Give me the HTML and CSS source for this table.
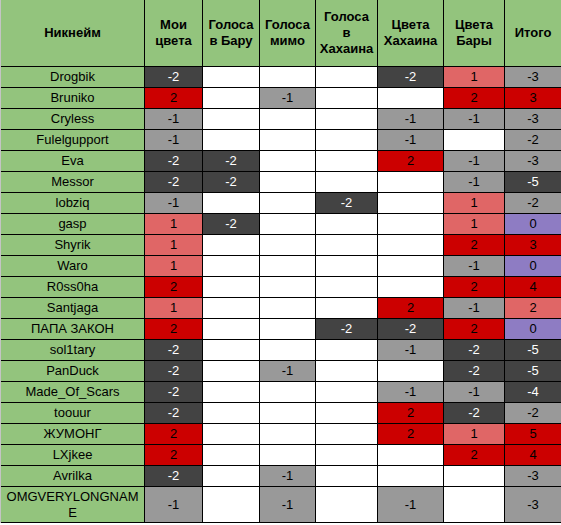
FILE: index.html
```html
<!DOCTYPE html>
<html lang="ru">
<head>
<meta charset="utf-8">
<title>Таблица</title>
<link rel="stylesheet" href="styles.css">
</head>
<body>
<div class="sheet">
  <div class="grid">
    <div class="c hd">Никнейм</div>
    <div class="c hd">Мои<br>цвета</div>
    <div class="c hd">Голоса<br>в Бару</div>
    <div class="c hd">Голоса<br>мимо</div>
    <div class="c hd">Голоса<br>в<br>Хахаина</div>
    <div class="c hd">Цвета<br>Хахаина</div>
    <div class="c hd">Цвета<br>Бары</div>
    <div class="c hd">Итого</div>

    <div class="c nm">Drogbik</div><div class="c d">-2</div><div class="c"></div><div class="c"></div><div class="c"></div><div class="c d">-2</div><div class="c lr">1</div><div class="c g">-3</div>
    <div class="c nm">Bruniko</div><div class="c r">2</div><div class="c"></div><div class="c g">-1</div><div class="c"></div><div class="c"></div><div class="c r">2</div><div class="c r">3</div>
    <div class="c nm">Cryless</div><div class="c g">-1</div><div class="c"></div><div class="c"></div><div class="c"></div><div class="c g">-1</div><div class="c g">-1</div><div class="c g">-3</div>
    <div class="c nm">Fulelgupport</div><div class="c g">-1</div><div class="c"></div><div class="c"></div><div class="c"></div><div class="c g">-1</div><div class="c"></div><div class="c g">-2</div>
    <div class="c nm">Eva</div><div class="c d">-2</div><div class="c d">-2</div><div class="c"></div><div class="c"></div><div class="c r">2</div><div class="c g">-1</div><div class="c g">-3</div>
    <div class="c nm">Messor</div><div class="c d">-2</div><div class="c d">-2</div><div class="c"></div><div class="c"></div><div class="c"></div><div class="c g">-1</div><div class="c d">-5</div>
    <div class="c nm">lobziq</div><div class="c g">-1</div><div class="c"></div><div class="c"></div><div class="c d">-2</div><div class="c"></div><div class="c lr">1</div><div class="c g">-2</div>
    <div class="c nm">gasp</div><div class="c lr">1</div><div class="c d">-2</div><div class="c"></div><div class="c"></div><div class="c"></div><div class="c lr">1</div><div class="c p">0</div>
    <div class="c nm">Shyrik</div><div class="c lr">1</div><div class="c"></div><div class="c"></div><div class="c"></div><div class="c"></div><div class="c r">2</div><div class="c r">3</div>
    <div class="c nm">Waro</div><div class="c lr">1</div><div class="c"></div><div class="c"></div><div class="c"></div><div class="c"></div><div class="c g">-1</div><div class="c p">0</div>
    <div class="c nm">R0ss0ha</div><div class="c r">2</div><div class="c"></div><div class="c"></div><div class="c"></div><div class="c"></div><div class="c r">2</div><div class="c r">4</div>
    <div class="c nm">Santjaga</div><div class="c lr">1</div><div class="c"></div><div class="c"></div><div class="c"></div><div class="c r">2</div><div class="c g">-1</div><div class="c lr">2</div>
    <div class="c nm">ПАПА ЗАКОН</div><div class="c r">2</div><div class="c"></div><div class="c"></div><div class="c d">-2</div><div class="c d">-2</div><div class="c r">2</div><div class="c p">0</div>
    <div class="c nm">sol1tary</div><div class="c d">-2</div><div class="c"></div><div class="c"></div><div class="c"></div><div class="c g">-1</div><div class="c d">-2</div><div class="c d">-5</div>
    <div class="c nm">PanDuck</div><div class="c d">-2</div><div class="c"></div><div class="c g">-1</div><div class="c"></div><div class="c"></div><div class="c d">-2</div><div class="c d">-5</div>
    <div class="c nm">Made_Of_Scars</div><div class="c d">-2</div><div class="c"></div><div class="c"></div><div class="c"></div><div class="c g">-1</div><div class="c g">-1</div><div class="c d">-4</div>
    <div class="c nm">toouur</div><div class="c d">-2</div><div class="c"></div><div class="c"></div><div class="c"></div><div class="c r">2</div><div class="c d">-2</div><div class="c g">-2</div>
    <div class="c nm">ЖУМОНГ</div><div class="c r">2</div><div class="c"></div><div class="c"></div><div class="c"></div><div class="c r">2</div><div class="c lr">1</div><div class="c r">5</div>
    <div class="c nm">LXjkee</div><div class="c r">2</div><div class="c"></div><div class="c"></div><div class="c"></div><div class="c"></div><div class="c r">2</div><div class="c r">4</div>
    <div class="c nm">Avrilka</div><div class="c d">-2</div><div class="c"></div><div class="c g">-1</div><div class="c"></div><div class="c"></div><div class="c"></div><div class="c g">-3</div>
    <div class="c nm">OMGVERYLONGNAME</div><div class="c g">-1</div><div class="c"></div><div class="c g">-1</div><div class="c"></div><div class="c g">-1</div><div class="c"></div><div class="c g">-3</div>
  </div>
</div>
</body>
</html>
```

FILE: styles.css
```css
html, body {
  margin: 0;
  padding: 0;
  background: #ffffff;
  overflow: hidden;
}

.sheet {
  width: 560px;
  border-left: 1px solid #c4c4c4;
}

.grid {
  display: grid;
  grid-template-columns: 143px 57px 56px 55px 61px 65px 60px 56px;
  grid-template-rows: 66px repeat(20, 20px) 35px;
  gap: 1px;
  background: #000000;
  border-bottom: 1px solid #000000;
  font-family: "Liberation Sans", Arial, sans-serif;
  font-size: 13px;
  line-height: 16px;
  color: #000000;
}

.c {
  background: #ffffff;
  display: flex;
  align-items: center;
  justify-content: center;
  text-align: center;
  padding: 0 3px;
  overflow: hidden;
  word-break: break-all;
}

.hd {
  background: #93c47d;
  font-weight: bold;
  word-break: normal;
}

.nm { background: #93c47d; }
.d { background: #434343; color: #ffffff; }
.g { background: #999999; }
.r { background: #cc0000; }
.lr { background: #e06666; }
.p { background: #8e7cc3; }
```
